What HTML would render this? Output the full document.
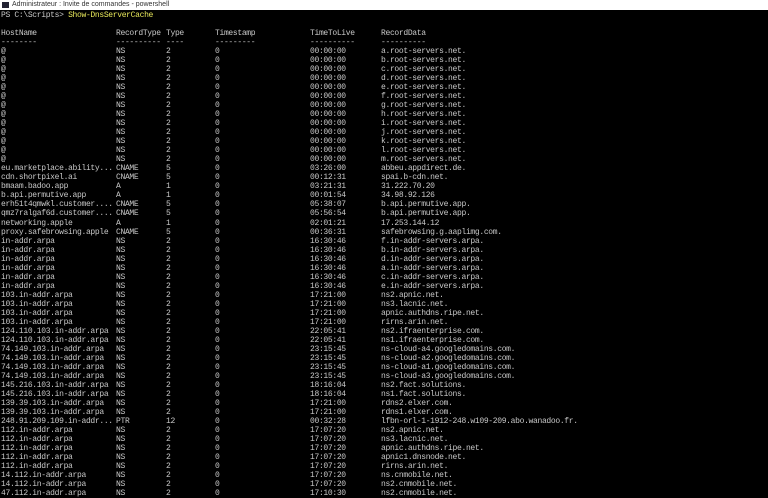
<!DOCTYPE html>
<html><head><meta charset="utf-8"><style>
html,body{margin:0;padding:0;width:768px;height:498px;overflow:hidden;background:#000;}
.t{position:absolute;left:0;top:0;width:768px;height:10px;background:#fff;font:7px "Liberation Sans",sans-serif;color:#333;line-height:10px;}
.t i{display:inline-block;width:7px;height:6px;background:#223;margin:2px 3px 0 2px;vertical-align:top;}
.c{position:absolute;left:0;top:10.8px;font:8px/9px "Liberation Mono",monospace;letter-spacing:-0.33px;color:#c8c8c8;}
.c div{position:relative;height:9.04px;white-space:pre;}
.c div b{font-weight:normal;position:absolute;top:0;}
.c div b:nth-child(1){left:1px}
.c div b:nth-child(2){left:116px}
.c div b:nth-child(3){left:166px}
.c div b:nth-child(4){left:215px}
.c div b:nth-child(5){left:310px}
.c div b:nth-child(6){left:381px}
.y{color:#e8e85a}
</style></head><body>
<div class="t"><i></i>Administrateur : Invite de commandes - powershell</div>
<div class="c">
<div><b>PS C:\Scripts&gt; <span class="y">Show-DnsServerCache</span></b></div>
<div></div>
<div><b>HostName</b><b>RecordType</b><b>Type</b><b>Timestamp</b><b>TimeToLive</b><b>RecordData</b></div>
<div><b>--------</b><b>----------</b><b>----</b><b>---------</b><b>----------</b><b>----------</b></div>
<div><b>@</b><b>NS</b><b>2</b><b>0</b><b>00:00:00</b><b>a.root-servers.net.</b></div>
<div><b>@</b><b>NS</b><b>2</b><b>0</b><b>00:00:00</b><b>b.root-servers.net.</b></div>
<div><b>@</b><b>NS</b><b>2</b><b>0</b><b>00:00:00</b><b>c.root-servers.net.</b></div>
<div><b>@</b><b>NS</b><b>2</b><b>0</b><b>00:00:00</b><b>d.root-servers.net.</b></div>
<div><b>@</b><b>NS</b><b>2</b><b>0</b><b>00:00:00</b><b>e.root-servers.net.</b></div>
<div><b>@</b><b>NS</b><b>2</b><b>0</b><b>00:00:00</b><b>f.root-servers.net.</b></div>
<div><b>@</b><b>NS</b><b>2</b><b>0</b><b>00:00:00</b><b>g.root-servers.net.</b></div>
<div><b>@</b><b>NS</b><b>2</b><b>0</b><b>00:00:00</b><b>h.root-servers.net.</b></div>
<div><b>@</b><b>NS</b><b>2</b><b>0</b><b>00:00:00</b><b>i.root-servers.net.</b></div>
<div><b>@</b><b>NS</b><b>2</b><b>0</b><b>00:00:00</b><b>j.root-servers.net.</b></div>
<div><b>@</b><b>NS</b><b>2</b><b>0</b><b>00:00:00</b><b>k.root-servers.net.</b></div>
<div><b>@</b><b>NS</b><b>2</b><b>0</b><b>00:00:00</b><b>l.root-servers.net.</b></div>
<div><b>@</b><b>NS</b><b>2</b><b>0</b><b>00:00:00</b><b>m.root-servers.net.</b></div>
<div><b>eu.marketplace.ability...</b><b>CNAME</b><b>5</b><b>0</b><b>03:26:00</b><b>abbeu.appdirect.de.</b></div>
<div><b>cdn.shortpixel.ai</b><b>CNAME</b><b>5</b><b>0</b><b>00:12:31</b><b>spai.b-cdn.net.</b></div>
<div><b>bmaam.badoo.app</b><b>A</b><b>1</b><b>0</b><b>03:21:31</b><b>31.222.70.20</b></div>
<div><b>b.api.permutive.app</b><b>A</b><b>1</b><b>0</b><b>00:01:54</b><b>34.98.92.126</b></div>
<div><b>erh51t4qmwkl.customer....</b><b>CNAME</b><b>5</b><b>0</b><b>05:38:07</b><b>b.api.permutive.app.</b></div>
<div><b>qmz7ralgaf6d.customer....</b><b>CNAME</b><b>5</b><b>0</b><b>05:56:54</b><b>b.api.permutive.app.</b></div>
<div><b>networking.apple</b><b>A</b><b>1</b><b>0</b><b>02:01:21</b><b>17.253.144.12</b></div>
<div><b>proxy.safebrowsing.apple</b><b>CNAME</b><b>5</b><b>0</b><b>00:36:31</b><b>safebrowsing.g.aaplimg.com.</b></div>
<div><b>in-addr.arpa</b><b>NS</b><b>2</b><b>0</b><b>16:30:46</b><b>f.in-addr-servers.arpa.</b></div>
<div><b>in-addr.arpa</b><b>NS</b><b>2</b><b>0</b><b>16:30:46</b><b>b.in-addr-servers.arpa.</b></div>
<div><b>in-addr.arpa</b><b>NS</b><b>2</b><b>0</b><b>16:30:46</b><b>d.in-addr-servers.arpa.</b></div>
<div><b>in-addr.arpa</b><b>NS</b><b>2</b><b>0</b><b>16:30:46</b><b>a.in-addr-servers.arpa.</b></div>
<div><b>in-addr.arpa</b><b>NS</b><b>2</b><b>0</b><b>16:30:46</b><b>c.in-addr-servers.arpa.</b></div>
<div><b>in-addr.arpa</b><b>NS</b><b>2</b><b>0</b><b>16:30:46</b><b>e.in-addr-servers.arpa.</b></div>
<div><b>103.in-addr.arpa</b><b>NS</b><b>2</b><b>0</b><b>17:21:00</b><b>ns2.apnic.net.</b></div>
<div><b>103.in-addr.arpa</b><b>NS</b><b>2</b><b>0</b><b>17:21:00</b><b>ns3.lacnic.net.</b></div>
<div><b>103.in-addr.arpa</b><b>NS</b><b>2</b><b>0</b><b>17:21:00</b><b>apnic.authdns.ripe.net.</b></div>
<div><b>103.in-addr.arpa</b><b>NS</b><b>2</b><b>0</b><b>17:21:00</b><b>rirns.arin.net.</b></div>
<div><b>124.110.103.in-addr.arpa</b><b>NS</b><b>2</b><b>0</b><b>22:05:41</b><b>ns2.ifraenterprise.com.</b></div>
<div><b>124.110.103.in-addr.arpa</b><b>NS</b><b>2</b><b>0</b><b>22:05:41</b><b>ns1.ifraenterprise.com.</b></div>
<div><b>74.149.103.in-addr.arpa</b><b>NS</b><b>2</b><b>0</b><b>23:15:45</b><b>ns-cloud-a4.googledomains.com.</b></div>
<div><b>74.149.103.in-addr.arpa</b><b>NS</b><b>2</b><b>0</b><b>23:15:45</b><b>ns-cloud-a2.googledomains.com.</b></div>
<div><b>74.149.103.in-addr.arpa</b><b>NS</b><b>2</b><b>0</b><b>23:15:45</b><b>ns-cloud-a1.googledomains.com.</b></div>
<div><b>74.149.103.in-addr.arpa</b><b>NS</b><b>2</b><b>0</b><b>23:15:45</b><b>ns-cloud-a3.googledomains.com.</b></div>
<div><b>145.216.103.in-addr.arpa</b><b>NS</b><b>2</b><b>0</b><b>18:16:04</b><b>ns2.fact.solutions.</b></div>
<div><b>145.216.103.in-addr.arpa</b><b>NS</b><b>2</b><b>0</b><b>18:16:04</b><b>ns1.fact.solutions.</b></div>
<div><b>139.39.103.in-addr.arpa</b><b>NS</b><b>2</b><b>0</b><b>17:21:00</b><b>rdns2.elxer.com.</b></div>
<div><b>139.39.103.in-addr.arpa</b><b>NS</b><b>2</b><b>0</b><b>17:21:00</b><b>rdns1.elxer.com.</b></div>
<div><b>248.91.209.109.in-addr...</b><b>PTR</b><b>12</b><b>0</b><b>00:32:28</b><b>lfbn-orl-1-1912-248.w109-209.abo.wanadoo.fr.</b></div>
<div><b>112.in-addr.arpa</b><b>NS</b><b>2</b><b>0</b><b>17:07:20</b><b>ns2.apnic.net.</b></div>
<div><b>112.in-addr.arpa</b><b>NS</b><b>2</b><b>0</b><b>17:07:20</b><b>ns3.lacnic.net.</b></div>
<div><b>112.in-addr.arpa</b><b>NS</b><b>2</b><b>0</b><b>17:07:20</b><b>apnic.authdns.ripe.net.</b></div>
<div><b>112.in-addr.arpa</b><b>NS</b><b>2</b><b>0</b><b>17:07:20</b><b>apnic1.dnsnode.net.</b></div>
<div><b>112.in-addr.arpa</b><b>NS</b><b>2</b><b>0</b><b>17:07:20</b><b>rirns.arin.net.</b></div>
<div><b>14.112.in-addr.arpa</b><b>NS</b><b>2</b><b>0</b><b>17:07:20</b><b>ns.cnmobile.net.</b></div>
<div><b>14.112.in-addr.arpa</b><b>NS</b><b>2</b><b>0</b><b>17:07:20</b><b>ns2.cnmobile.net.</b></div>
<div><b>47.112.in-addr.arpa</b><b>NS</b><b>2</b><b>0</b><b>17:10:30</b><b>ns2.cnmobile.net.</b></div>
</div>
</body></html>
